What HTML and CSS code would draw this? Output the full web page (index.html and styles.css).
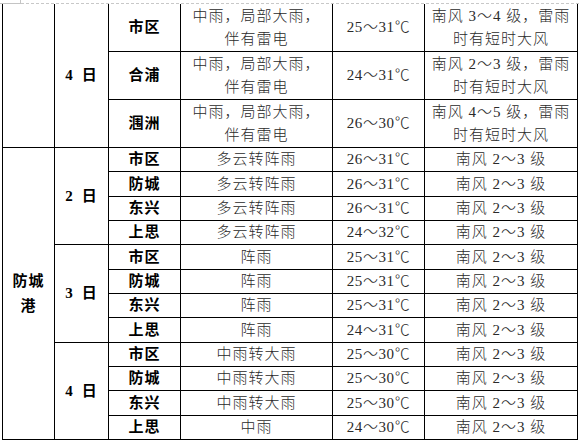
FILE: index.html
```html
<!DOCTYPE html>
<html lang="zh-CN">
<head>
<meta charset="utf-8">
<title>天气预报</title>
<link rel="stylesheet" href="styles.css">
</head>
<body>
<div class="edge"><div class="corner"></div><div class="dash"></div></div>
<div class="grid">
  <div class="c r3"></div>
  <div class="c b r3"><span><span class="d">4</span>日</span></div>
  <div class="c b">市区</div>
  <div class="c two">中雨，局部大雨，伴有雷电</div>
  <div class="c n">25～31℃</div>
  <div class="c two">南风 3～4 级，雷雨时有短时大风</div>

  <div class="c b">合浦</div>
  <div class="c two">中雨，局部大雨，伴有雷电</div>
  <div class="c n">24～31℃</div>
  <div class="c two">南风 2～3 级，雷雨时有短时大风</div>

  <div class="c b">涠洲</div>
  <div class="c two">中雨，局部大雨，伴有雷电</div>
  <div class="c n">26～30℃</div>
  <div class="c two">南风 4～5 级，雷雨时有短时大风</div>

  <div class="c b r12 city">防城港</div>
  <div class="c b r4"><span><span class="d">2</span>日</span></div>
  <div class="c b">市区</div><div class="c">多云转阵雨</div><div class="c n">26～31℃</div><div class="c">南风 2～3 级</div>
  <div class="c b">防城</div><div class="c">多云转阵雨</div><div class="c n">26～31℃</div><div class="c">南风 2～3 级</div>
  <div class="c b">东兴</div><div class="c">多云转阵雨</div><div class="c n">26～31℃</div><div class="c">南风 2～3 级</div>
  <div class="c b">上思</div><div class="c">多云转阵雨</div><div class="c n">24～32℃</div><div class="c">南风 2～3 级</div>

  <div class="c b r4"><span><span class="d">3</span>日</span></div>
  <div class="c b">市区</div><div class="c">阵雨</div><div class="c n">25～31℃</div><div class="c">南风 2～3 级</div>
  <div class="c b">防城</div><div class="c">阵雨</div><div class="c n">25～31℃</div><div class="c">南风 2～3 级</div>
  <div class="c b">东兴</div><div class="c">阵雨</div><div class="c n">25～31℃</div><div class="c">南风 2～3 级</div>
  <div class="c b">上思</div><div class="c">阵雨</div><div class="c n">24～31℃</div><div class="c">南风 2～3 级</div>

  <div class="c b r4"><span><span class="d">4</span>日</span></div>
  <div class="c b">市区</div><div class="c">中雨转大雨</div><div class="c n">25～30℃</div><div class="c">南风 2～3 级</div>
  <div class="c b">防城</div><div class="c">中雨转大雨</div><div class="c n">25～30℃</div><div class="c">南风 2～3 级</div>
  <div class="c b">东兴</div><div class="c">中雨转大雨</div><div class="c n">25～30℃</div><div class="c">南风 2～3 级</div>
  <div class="c b">上思</div><div class="c">中雨</div><div class="c n">24～30℃</div><div class="c">南风 2～3 级</div>
</div>
</body>
</html>
```
FILE: styles.css
```css
html, body {
  margin: 0;
  padding: 0;
  background: #fff;
}
body {
  font-family: "Liberation Serif", "Noto Sans CJK SC", serif;
  font-size: 15px;
  color: #1a1a1a;
}
.edge {
  display: flex;
  height: 4px;
}
.corner {
  width: 20px;
  height: 3px;
  border-right: 1px solid #c4c4c4;
  border-bottom: 1px solid #c4c4c4;
}
.dash {
  flex: 1;
  height: 1px;
  margin-top: 3px;
  background: repeating-linear-gradient(to right, #c8c8c8 0 3px, transparent 3px 5px);
}
.grid {
  display: grid;
  width: 576px;
  box-sizing: border-box;
  margin-left: 2px;
  padding: 0 1px 1px 1px;
  background: #000;
  gap: 1px;
  grid-template-columns: 51px 53px 71px 151px 91px 152px;
  grid-template-rows: 47px 47px 47px 23px 24px 23px 23px 24px 23px 23px 24px 23px 23px 24px 23px;
}
.c {
  background: #fff;
  display: flex;
  align-items: center;
  justify-content: center;
  text-align: center;
  letter-spacing: 1px;
  line-height: 23px;
  font-weight: 300;
  color: #2a2a2a;
}
.b {
  font-weight: 700;
  color: #000;
}
.d {
  margin-right: 8px;
}
.n {
  letter-spacing: 0.6px;
}
.two {
  padding: 0 6px;
}
.city {
  padding: 0 6px;
  line-height: 25px;
}
.r3 { grid-row: span 3; }
.r4 { grid-row: span 4; }
.r12 { grid-row: span 12; }
```
